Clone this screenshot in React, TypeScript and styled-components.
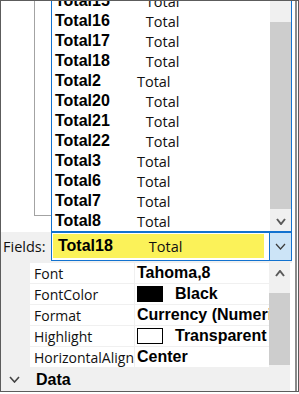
import React from 'react';
import styled, { createGlobalStyle } from 'styled-components';

const Global = createGlobalStyle`
  html, body { margin: 0; padding: 0; background: #ffffff; }
  body { width: 299px; height: 394px; overflow: hidden; }
  * { box-sizing: border-box; }
`;

const BLUE = '#1272cf';
const BOLD = `"Liberation Sans", Arial, sans-serif`;
const UI = `"Open Sans", "Noto Sans", sans-serif`;

const Window = styled.div`
  width: 299px;
  height: 392px;
  border: 1px solid #5c5c5c;
  display: flex;
  background: #fff;
  overflow: hidden;
`;

const Main = styled.div`
  width: 291px;
  display: flex;
  flex-direction: column;
`;

const RightEdge = styled.div`
  flex: 1;
  margin-right: 1px;
  border-right: 2px solid #8a8a8a;
`;

const TopArea = styled.div`
  height: 231px;
  display: flex;
`;

const LeftFrame = styled.div`
  width: 50px;
  padding-left: 33px;
`;

const FrameBox = styled.div`
  width: 17px;
  height: 215px;
  border-left: 1px solid #a3a3a3;
  border-bottom: 1px solid #a3a3a3;
`;

const List = styled.div`
  width: 241px;
  border: 1px solid ${BLUE};
  border-top: none;
  display: flex;
  background: #fff;
`;

const ListBody = styled.div`
  flex: 1;
  display: flex;
  flex-direction: column;
  justify-content: flex-end;
  overflow: hidden;
  padding-left: 3px;
`;

const Row = styled.div`
  height: 20px;
  flex: none;
  display: flex;
  align-items: center;
  gap: 36px;
  white-space: nowrap;
`;

const Name = styled.span`
  font-family: ${BOLD};
  font-weight: 700;
  font-size: 16px;
  color: #000;
`;

const Kind = styled.span`
  font-family: ${UI};
  font-size: 14.5px;
  color: #111;
`;

const Scrollbar = styled.div`
  width: 21px;
  background: #f0f0f0;
  display: flex;
  flex-direction: column;
`;

const Track = styled.div<{ $top: number; $bottom: number }>`
  flex: 1;
  display: flex;
  padding-top: ${(p) => p.$top}px;
  padding-bottom: ${(p) => p.$bottom}px;
`;

const Thumb = styled.div`
  flex: 1;
  background: #cdcdcd;
`;

const Arrow = styled.div`
  height: 20px;
  flex: none;
  display: flex;
  align-items: center;
  justify-content: center;
`;

const FieldsRow = styled.div`
  height: 31px;
  display: flex;
  align-items: flex-start;
  background: #f0f0f0;
`;

const FieldsLabel = styled.div`
  width: 50px;
  height: 29px;
  padding-left: 2px;
  display: flex;
  align-items: center;
  font-family: ${UI};
  font-size: 14.5px;
  color: #111;
`;

const FieldBox = styled.div`
  width: 241px;
  height: 29px;
  border: 1px solid ${BLUE};
  background: #fff;
  display: flex;
`;

const Yellow = styled.div`
  flex: 1;
  margin: 1px 5px 2px 1px;
  background: #fbf259;
  display: flex;
  align-items: center;
  gap: 36px;
  padding-left: 5px;
  white-space: nowrap;
`;

const DropButton = styled.div`
  width: 22px;
  border-left: 1px solid ${BLUE};
  background: #cce4f7;
  display: flex;
  align-items: center;
  justify-content: center;
`;

const PropGrid = styled.div`
  flex: 1;
  display: flex;
  padding-right: 2px;
`;

const PropList = styled.div`
  flex: 1;
  display: flex;
  flex-direction: column;
`;

const PropRow = styled.div`
  height: 21px;
  display: grid;
  grid-template-columns: 29px 105px 1fr;
`;

const Margin = styled.div`
  background: #f0f0f0;
`;

const PropName = styled.div`
  border-bottom: 1px solid #f0f0f0;
  border-right: 1px solid #f0f0f0;
  padding-left: 4px;
  display: flex;
  align-items: center;
  overflow: hidden;
  white-space: nowrap;
  font-family: ${UI};
  font-size: 14px;
  color: #111;
`;

const PropValue = styled.div`
  border-bottom: 1px solid #f0f0f0;
  padding-left: 2px;
  display: flex;
  align-items: center;
  gap: 12px;
  overflow: hidden;
  white-space: nowrap;
  font-family: ${BOLD};
  font-weight: 700;
  font-size: 16px;
  color: #000;
`;

const Swatch = styled.span<{ $color: string }>`
  flex: none;
  width: 26px;
  height: 16px;
  border: 1px solid #000;
  background: ${(p) => p.$color};
`;

const Category = styled.div`
  flex: 1;
  background: #f0f0f0;
  display: flex;
  align-items: center;
  gap: 16px;
  padding-left: 8px;
  font-family: ${BOLD};
  font-weight: 700;
  font-size: 16px;
  color: #000;
`;

const Chevron = ({ up, color, w, h, sw }: { up?: boolean; color: string; w: number; h: number; sw: number }) => (
  <svg width={w + 2} height={h + 2} viewBox={`-1 -1 ${w + 2} ${h + 2}`}>
    <polyline
      points={up ? `0,${h} ${w / 2},0 ${w},${h}` : `0,0 ${w / 2},${h} ${w},0`}
      fill="none"
      stroke={color}
      strokeWidth={sw}
    />
  </svg>
);

const rows = [
  'Total15', 'Total16', 'Total17', 'Total18', 'Total2', 'Total20',
  'Total21', 'Total22', 'Total3', 'Total6', 'Total7', 'Total8',
];

const props: { name: string; value: string; swatch?: string }[] = [
  { name: 'Font', value: 'Tahoma,8' },
  { name: 'FontColor', value: 'Black', swatch: '#000' },
  { name: 'Format', value: 'Currency (Numeric)' },
  { name: 'Highlight', value: 'Transparent', swatch: '#fff' },
  { name: 'HorizontalAlignment', value: 'Center' },
];

export default function App() {
  return (
    <>
      <Global />
      <Window>
        <Main>
          <TopArea>
            <LeftFrame>
              <FrameBox />
            </LeftFrame>
            <List>
              <ListBody>
                {rows.map((r) => (
                  <Row key={r}>
                    <Name>{r}</Name>
                    <Kind>Total</Kind>
                  </Row>
                ))}
              </ListBody>
              <Scrollbar>
                <Track $top={21} $bottom={2}>
                  <Thumb />
                </Track>
                <Arrow>
                  <Chevron color="#5a5a5a" w={8} h={5} sw={2} />
                </Arrow>
              </Scrollbar>
            </List>
          </TopArea>
          <FieldsRow>
            <FieldsLabel>Fields:</FieldsLabel>
            <FieldBox>
              <Yellow>
                <Name>Total18</Name>
                <Kind>Total</Kind>
              </Yellow>
              <DropButton>
                <Chevron color="#3c3c3c" w={9} h={5} sw={1.2} />
              </DropButton>
            </FieldBox>
          </FieldsRow>
          <PropGrid>
            <PropList>
              {props.map((p) => (
                <PropRow key={p.name}>
                  <Margin />
                  <PropName>{p.name}</PropName>
                  <PropValue>
                    {p.swatch && <Swatch $color={p.swatch} />}
                    {p.value}
                  </PropValue>
                </PropRow>
              ))}
              <Category>
                <Chevron color="#444" w={9} h={5} sw={1.6} />
                Data
              </Category>
            </PropList>
            <Scrollbar>
              <Arrow>
                <Chevron up color="#5a5a5a" w={8} h={5} sw={2} />
              </Arrow>
              <Track $top={10} $bottom={26}>
                <Thumb />
              </Track>
            </Scrollbar>
          </PropGrid>
        </Main>
        <RightEdge />
      </Window>
    </>
  );
}
